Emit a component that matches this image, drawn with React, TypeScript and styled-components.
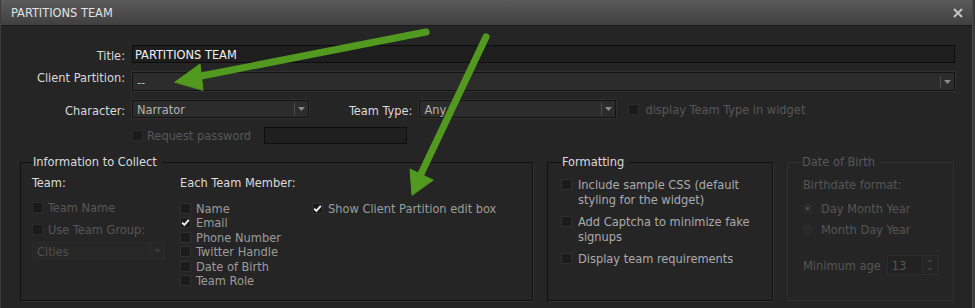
import React from 'react';
import styled, { createGlobalStyle } from 'styled-components';

const Global = createGlobalStyle`
  html, body {
    margin: 0;
    padding: 0;
    background: #3a3a3a;
  }
  * {
    box-sizing: border-box;
  }
`;

const FONT = `"DejaVu Sans Condensed", "DejaVu Sans", Tahoma, sans-serif`;

function Checkbox(props: any) {
  return (
    <Box disabled={props.disabled}>
      {props.checked ? (
        <svg width="9" height="9" viewBox="0 0 9 9">
          <path d="M1.2 4.6 L3.4 6.8 L7.8 1.8" fill="none" stroke="#f2f2f2" strokeWidth="1.9" />
        </svg>
      ) : null}
    </Box>
  );
}

function Select(props: any) {
  return (
    <SelectBox width={props.width} disabled={props.disabled} tall={props.tall}>
      <SelectText disabled={props.disabled}>{props.value}</SelectText>
      <Caret disabled={props.disabled}>
        <svg width="7" height="4" viewBox="0 0 7 4">
          <path d="M0 0 L7 0 L3.5 4 Z" fill={props.disabled ? '#3a3a3a' : '#8a8a8a'} />
        </svg>
      </Caret>
    </SelectBox>
  );
}

function CheckRow(props: any) {
  return (
    <CheckLine gap={props.gap}>
      <Checkbox checked={props.checked} disabled={props.disabled} />
      <CheckLabel tone={props.tone}>{props.children}</CheckLabel>
    </CheckLine>
  );
}

export default function App() {
  return (
    <>
      <Global />
      <Dialog>
        <TitleBar>
          <span>PARTITIONS TEAM</span>
          <svg width="10" height="10" viewBox="0 0 10 10">
            <path d="M1 1 L9 9 M9 1 L1 9" stroke="#c4c4c4" strokeWidth="2" />
          </svg>
        </TitleBar>
        <Body>
          <FormGrid>
            <Label>Title:</Label>
            <TextInput>PARTITIONS TEAM</TextInput>

            <Label raised>Client Partition:</Label>
            <Select value="--" tall />

            <Label>Character:</Label>
            <Row>
              <Select value="Narrator" width={177} />
              <InlineLabel>Team Type:</InlineLabel>
              <Select value="Any" width={197} />
              <WidgetCheck>
                <Checkbox disabled />
                <CheckLabel tone="off">display Team Type in widget</CheckLabel>
              </WidgetCheck>
            </Row>

            <span />
            <Row>
              <CheckLine gap={4}>
                <Checkbox disabled />
                <CheckLabel tone="off">Request password</CheckLabel>
              </CheckLine>
              <PasswordInput />
            </Row>
          </FormGrid>

          <Groups>
            <Group width={513} pad={11}>
              <Legend>Information to Collect</Legend>
              <Columns>
                <TeamCol>
                  <ColHead>Team:</ColHead>
                  <TeamList>
                    <CheckRow disabled tone="off">Team Name</CheckRow>
                    <CheckRow disabled tone="off">Use Team Group:</CheckRow>
                  </TeamList>
                  <Select value="Cities" width={133} disabled />
                </TeamCol>
                <MemberCol>
                  <ColHead>Each Team Member:</ColHead>
                  <MemberList>
                    <CheckRow tone="mid">Name</CheckRow>
                    <CheckRow tone="mid" checked>Email</CheckRow>
                    <CheckRow tone="mid">Phone Number</CheckRow>
                    <CheckRow tone="mid">Twitter Handle</CheckRow>
                    <CheckRow tone="mid">Date of Birth</CheckRow>
                    <CheckRow tone="mid">Team Role</CheckRow>
                  </MemberList>
                </MemberCol>
                <ShowCol>
                  <CheckRow tone="mid" checked>Show Client Partition edit box</CheckRow>
                </ShowCol>
              </Columns>
            </Group>

            <Group width={226} pad={13}>
              <Legend>Formatting</Legend>
              <FormatList>
                <CheckRow tone="light" gap={6}>Include sample CSS (default styling for the widget)</CheckRow>
                <CheckRow tone="light" gap={6}>Add Captcha to minimize fake signups</CheckRow>
                <CheckRow tone="light" gap={6}>Display team requirements</CheckRow>
              </FormatList>
            </Group>

            <Group width={167} pad={15} dim>
              <Legend dim>Date of Birth</Legend>
              <DobStack>
                <DimText>Birthdate format:</DimText>
                <RadioList>
                  <RadioLine>
                    <Radio checked />
                    <DimText>Day Month Year</DimText>
                  </RadioLine>
                  <RadioLine>
                    <Radio />
                    <DimText>Month Day Year</DimText>
                  </RadioLine>
                </RadioList>
                <AgeRow>
                  <DimText>Minimum age</DimText>
                  <Spinner>
                    <SpinValue>13</SpinValue>
                    <SpinButtons>
                      <SpinArrow up />
                      <SpinArrow />
                    </SpinButtons>
                  </Spinner>
                </AgeRow>
              </DobStack>
            </Group>
          </Groups>

          <Arrows width="975" height="308" viewBox="0 0 975 308">
            <g fill="#529a1f" stroke="#529a1f" strokeLinecap="round" strokeLinejoin="round">
              <line x1="426" y1="32" x2="196" y2="77" strokeWidth="7" />
              <polygon points="175,82 200,64 203,90" strokeWidth="1" />
              <line x1="486" y1="37" x2="420" y2="176" strokeWidth="7" />
              <polygon points="412,195 410,169 433,180" strokeWidth="1" />
            </g>
          </Arrows>
        </Body>
      </Dialog>
    </>
  );
}

const Dialog = styled.div`
  position: relative;
  width: 973px;
  height: 308px;
  background: #252525;
  border-left: 1px solid #3c3c3c;
  border-right: 1px solid #4a4a4a;
  font-family: ${FONT};
  font-size: 12.7px;
  color: #d6d6d6;
  overflow: hidden;
`;

const TitleBar = styled.div`
  height: 26px;
  display: flex;
  align-items: center;
  justify-content: space-between;
  padding: 0 9px 0 10px;
  background: linear-gradient(#5a5a5a, #404040);
  border-bottom: 1px solid #1a1a1a;
  color: #e2e2e2;
`;

const Body = styled.div`
  padding: 19px 0 0 0;
`;

const FormGrid = styled.div`
  display: grid;
  grid-template-columns: 124px 823px;
  column-gap: 7px;
  row-gap: 9px;
  align-items: center;
`;

const Label = styled.label<{ raised?: boolean }>`
  text-align: right;
  color: #dadada;
  white-space: nowrap;
  padding-top: ${(p) => (p.raised ? '0' : '2px')};
  ${(p) => (p.raised ? 'align-self: start; margin-top: -2px;' : '')}
`;

const InlineLabel = styled(Label)`
  margin-left: 40px;
  margin-right: 7px;
`;

const Row = styled.div`
  display: flex;
  align-items: center;
`;

const WidgetCheck = styled.div`
  display: flex;
  align-items: center;
  gap: 6px;
  margin-left: 12px;
`;

const TextInput = styled.div`
  height: 18px;
  line-height: 17px;
  padding: 0 2px;
  background: #1e1e1e;
  border: 1px solid #0d0d0d;
  color: #f0f0f0;
`;

const PasswordInput = styled.div`
  width: 143px;
  height: 17px;
  margin-left: 13px;
  background: #1f1f1f;
  border: 1px solid #0f0f0f;
`;

const SelectBox = styled.div<{ width?: number; disabled?: boolean; tall?: boolean }>`
  display: flex;
  align-items: center;
  width: ${(p) => (p.width ? `${p.width}px` : 'auto')};
  height: ${(p) => (p.tall ? '19px' : '18px')};
  background: ${(p) => (p.disabled ? '#272727' : '#2c2c2c')};
  border: 1px solid ${(p) => (p.disabled ? '#2a2a2a' : '#141414')};
  box-shadow: ${(p) => (p.disabled ? 'none' : '0 0 0 1px #303030')};
`;

const SelectText = styled.span<{ disabled?: boolean }>`
  flex: 1;
  padding: 1px 0 0 4px;
  color: ${(p) => (p.disabled ? '#4e4e4e' : '#b4b4b4')};
  white-space: nowrap;
`;

const Caret = styled.span<{ disabled?: boolean }>`
  display: flex;
  align-items: center;
  justify-content: center;
  width: 14px;
  height: 12px;
  border-left: 1px solid ${(p) => (p.disabled ? '#2e2e2e' : '#4a4a4a')};
`;

const Box = styled.span<{ disabled?: boolean }>`
  display: inline-flex;
  align-items: center;
  justify-content: center;
  flex: none;
  width: 11px;
  height: 11px;
  background: #1b1b1b;
  border: 1px solid ${(p) => (p.disabled ? '#2a2a2a' : '#303030')};
`;

const CheckLine = styled.div<{ gap?: number }>`
  display: flex;
  align-items: flex-start;
  gap: ${(p) => p.gap ?? 5}px;
  & > span:first-child {
    margin-top: 2px;
  }
`;

const toneColor: Record<string, string> = {
  off: '#575757',
  mid: '#9c9c9c',
  light: '#ababab',
};

const CheckLabel = styled.span<{ tone?: string }>`
  color: ${(p) => toneColor[p.tone || 'mid']};
  line-height: 15px;
`;

const Groups = styled.div`
  display: flex;
  gap: 14px;
  margin: 10px 0 0 19px;
`;

const Group = styled.fieldset<{ width: number; pad: number; dim?: boolean }>`
  width: ${(p) => p.width}px;
  height: 147px;
  margin: 0;
  padding: 0 8px 0 ${(p) => p.pad}px;
  border: 1px solid ${(p) => (p.dim ? '#303030' : '#101010')};
  box-shadow: ${(p) => (p.dim ? 'none' : '1px 1px 0 #333')};
`;

const Legend = styled.legend<{ dim?: boolean }>`
  margin-left: ${(p) => (p.dim ? '-1px' : '1px')};
  padding: 0 5px 0 0;
  color: ${(p) => (p.dim ? '#585858' : '#dcdcdc')};
  line-height: 16px;
`;

const Columns = styled.div`
  display: flex;
  padding-top: 5px;
`;

const ColHead = styled.div`
  color: #dcdcdc;
  line-height: 15px;
`;

const TeamCol = styled.div`
  width: 148px;
  display: flex;
  flex-direction: column;
`;

const TeamList = styled.div`
  display: flex;
  flex-direction: column;
  gap: 7px;
  margin: 10px 0 5px;
`;

const MemberCol = styled.div`
  width: 132px;
`;

const MemberList = styled.div`
  display: flex;
  flex-direction: column;
  margin-top: 11px;
  & > div {
    height: 14.4px;
  }
`;

const ShowCol = styled.div`
  padding-top: 26px;
`;

const FormatList = styled.div`
  display: flex;
  flex-direction: column;
  gap: 7px;
  padding-top: 7px;
`;

const DimText = styled.span`
  color: #555555;
  line-height: 15px;
`;

const DobStack = styled.div`
  display: flex;
  flex-direction: column;
  padding-top: 7px;
`;

const RadioList = styled.div`
  display: flex;
  flex-direction: column;
  gap: 6px;
  margin: 9px 0 0 -1px;
`;

const RadioLine = styled.div`
  display: flex;
  align-items: center;
  gap: 8px;
`;

const Radio = styled.span<{ checked?: boolean }>`
  width: 11px;
  height: 11px;
  border-radius: 50%;
  background: ${(p) =>
    p.checked ? 'radial-gradient(circle, #4a4a4a 0 1.5px, #2a2a2a 2px)' : '#2a2a2a'};
`;

const AgeRow = styled.div`
  display: flex;
  align-items: center;
  gap: 6px;
  margin-top: 18px;
`;

const Spinner = styled.div`
  display: flex;
  height: 20px;
  border: 1px solid #2c2c2c;
`;

const SpinValue = styled.span`
  width: 34px;
  padding: 2px 0 0 4px;
  color: #555555;
  background: #222222;
`;

const SpinButtons = styled.div`
  display: flex;
  flex-direction: column;
  width: 16px;
  border-left: 1px solid #2c2c2c;
`;

const SpinArrow = styled.span<{ up?: boolean }>`
  flex: 1;
  display: flex;
  align-items: center;
  justify-content: center;
  &::before {
    content: '';
    border-left: 3px solid transparent;
    border-right: 3px solid transparent;
    ${(p) => (p.up ? 'border-bottom: 3px solid #3c3c3c;' : 'border-top: 3px solid #3c3c3c;')}
  }
`;

const Arrows = styled.svg`
  position: absolute;
  left: -1px;
  top: 0;
  pointer-events: none;
`;
